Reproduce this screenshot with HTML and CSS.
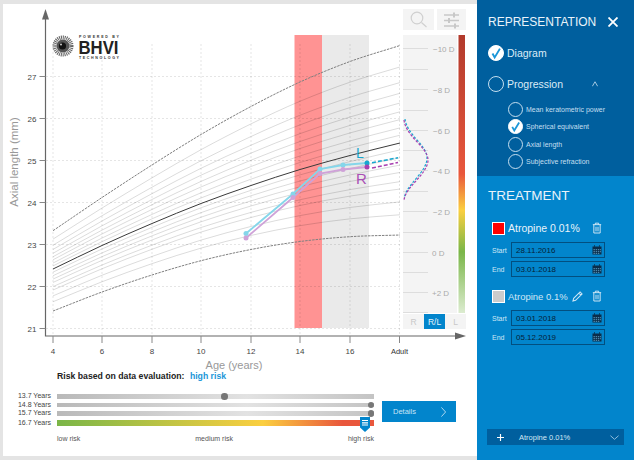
FILE: index.html
```html
<!DOCTYPE html>
<html lang="en">
<head>
    <meta charset="UTF-8">
    <meta name="viewport" content="width=device-width, initial-scale=1.0">
    <title>Myopia Progression</title>
    <link rel="stylesheet" href="styles.css">
</head>
<body>
    <svg class="icon-defs" width="0" height="0">
        <symbol id="i-check" viewBox="0 0 16 16">
            <path d="M4 8.5 L6.5 13 L12.5 3" fill="none" stroke="#1a96d8" stroke-width="2.2"/>
        </symbol>
        <symbol id="i-trash" viewBox="0 0 12 14">
            <path d="M1 3h10M4 3V1.2h4V3M2.2 3v10h7.6V3M4.8 5.5v5.5M7.2 5.5v5.5" fill="none" stroke="currentColor" stroke-width="1.1"/>
        </symbol>
        <symbol id="i-calendar" viewBox="0 0 10 10">
            <path d="M0.5 1.5h9v8h-9z" fill="#0b2d4a"/>
            <path d="M1.5 4h1.4v1.2H1.5zM3.7 4h1.4v1.2H3.7zM5.9 4h1.4v1.2H5.9zM8 4h.9v1.2H8zM1.5 6h1.4v1.2H1.5zM3.7 6h1.4v1.2H3.7zM5.9 6h1.4v1.2H5.9zM8 6h.9v1.2H8zM1.5 8h1.4v.9H1.5zM3.7 8h1.4v.9H3.7zM5.9 8h1.4v.9H5.9z" fill="#4d86a8"/>
            <path d="M2.5 0.3v1.4M7.5 0.3v1.4" stroke="#0b2d4a" stroke-width="1"/>
        </symbol>
    </svg>

    <div class="page">
        <div class="main">
            <div class="sheet">
                <svg class="chart" viewBox="3 4 474 366" width="474" height="366">
                    <!-- bands -->
                    <rect x="294.5" y="35" width="27.5" height="293" fill="#ff9393"/>
                    <rect x="322" y="35" width="47" height="293" fill="#eaeaea"/>

                    <!-- grid -->
                    <g class="grid">
                        <path d="M53 44V336M102 44V336M152 44V336M201 44V336M251 44V336M300 44V336M350 44V336M399.5 44V336"/>
                        <path d="M46 76.5H400M46 118.5H400M46 160.5H400M46 202.5H400M46 244.5H400M46 286.5H400M46 328.5H400"/>
                    </g>

                    <!-- percentile curves, filled in by chart.js -->
                    <g id="curves"></g>

                    <!-- axes -->
                    <g class="axis">
                        <path d="M45.5 16V336H458"/>
                    </g>
                    <g class="axis-ticks">
                        <path d="M39.500 76.5h6M39.500 118.5h6M39.500 160.5h6M39.500 202.5h6M39.500 244.5h6M39.500 286.5h6M39.500 328.5h6"/>
                        <path d="M53 336v7M102 336v7M152 336v7M201 336v7M251 336v7M300 336v7M350 336v7M399.5 336v7"/>
                    </g>
                    <path d="M45.5 9L49 19.5H42Z" fill="#666"/>
                    <path d="M466 336L455 332.5V339.5Z" fill="#666"/>

                    <g class="tick-label y-labels">
                        <text x="36.500" y="79.500">27</text>
                        <text x="36.500" y="121.500">26</text>
                        <text x="36.500" y="163.500">25</text>
                        <text x="36.500" y="205.500">24</text>
                        <text x="36.500" y="247.500">23</text>
                        <text x="36.500" y="289.500">22</text>
                        <text x="36.500" y="331.500">21</text>
                    </g>
                    <g class="tick-label x-labels">
                        <text x="53" y="353.500">4</text>
                        <text x="102" y="353.500">6</text>
                        <text x="152" y="353.500">8</text>
                        <text x="201" y="353.500">10</text>
                        <text x="251" y="353.500">12</text>
                        <text x="300" y="353.500">14</text>
                        <text x="350" y="353.500">16</text>
                        <text x="399.5" y="353.500" class="adult">Adult</text>
                    </g>
                    <text class="axis-title age-title" x="234" y="368.500" text-anchor="middle">Age (years)</text>
                    <text class="axis-title" transform="translate(18 162) rotate(-90)" text-anchor="middle">Axial length (mm)</text>

                    <!-- logo -->
                    <circle cx="63" cy="46" r="8.5" fill="none" stroke="#666" stroke-width="4" stroke-dasharray="1 .8"/>
                    <circle cx="63" cy="46" r="6.500" fill="#555"/>
                    <circle cx="62.5" cy="46" r="3.6" fill="#111"/>
                    <circle cx="61" cy="44.5" r="1" fill="#ccc"/>
                    <text class="logo-small" x="79" y="38" textLength="40">POWERED BY</text>
                    <text class="logo-big" x="78.5" y="53.5" textLength="40" lengthAdjust="spacingAndGlyphs">BHVI</text>
                    <text class="logo-small" x="79" y="59" textLength="40">TECHNOLOGY</text>

                    <!-- data -->
                    <polyline class="line-l" points="246,233.5 293,194 320,169 343,165 367,163"/>
                    <polyline class="line-r" points="246,238 293,197.5 320,173.5 343,169.5 367,167"/>
                    <g fill="#85d6ea">
                        <circle cx="246" cy="233.5" r="2.5"/><circle cx="293" cy="194" r="2.5"/><circle cx="320" cy="169" r="2.5"/><circle cx="343" cy="165" r="2.5"/>
                    </g>
                    <g fill="#cfa2d8">
                        <circle cx="246" cy="238" r="2.5"/><circle cx="293" cy="197.5" r="2.5"/><circle cx="320" cy="173.5" r="2.5"/><circle cx="343" cy="169.5" r="2.5"/>
                    </g>
                    <circle cx="367" cy="163" r="2.5" fill="#16a7cf"/>
                    <circle cx="367" cy="167" r="2.5" fill="#a83fb0"/>
                    <path class="dash-l" d="M372 162.7L398 157.7"/>
                    <path class="dash-r" d="M372 168L398 162.5"/>
                    <text class="mark-l" x="356" y="158">L</text>
                    <text class="mark-r" x="356" y="184">R</text>

                    <!-- refraction scale -->
                    <rect x="403" y="35" width="54" height="278" fill="#f4f4f4"/>
                    <defs>
                        <linearGradient id="scale" x1="0" y1="0" x2="0" y2="1">
                            <stop offset="0" stop-color="#b23a2c"/>
                            <stop offset="0.5" stop-color="#e9573c"/>
                            <stop offset="0.63" stop-color="#fbcf40"/>
                            <stop offset="0.78" stop-color="#7ab648"/>
                            <stop offset="1" stop-color="#dcecd0"/>
                        </linearGradient>
                    </defs>
                    <rect x="458.5" y="35" width="6.5" height="278" fill="url(#scale)"/>
                    <path class="scale-ticks" d="M403 48.500H428M403 69.500H428M403 89.500H428M403 110.500H428M403 130.500H428M403 150.500H428M403 170.500H428M403 191.500H428M403 211.500H428M403 232.500H428M403 252.500H428M403 272.500H428M403 292.500H428M403 312.500H428"/>
                    <g class="scale-label">
                        <text x="433" y="51.500">−10 D</text>
                        <text x="433" y="92.500">−8 D</text>
                        <text x="433" y="133.500">−6 D</text>
                        <text x="433" y="173.500">−4 D</text>
                        <text x="433" y="214.500">−2 D</text>
                        <text x="432" y="255.500">0 D</text>
                        <text x="432" y="295.500">+2 D</text>
                    </g>
                    <path class="dash-l thin" d="M405 119C407 135 427 145 427 158C427 172 407 184 404.500 197"/>
                    <path class="dash-r thin" d="M404 120C406 137 428 147 428 160C428 174 406 186 404 200"/>

                    <!-- R RL L switch -->
                    <rect x="403" y="314" width="21" height="15" fill="#f4f4f4"/>
                    <rect x="424" y="314" width="21" height="15" fill="#0285cc"/>
                    <rect x="445" y="314" width="21" height="15" fill="#f4f4f4"/>
                    <text class="eye off" x="413.500" y="324.500">R</text>
                    <text class="eye on" x="434.500" y="324.500">R/L</text>
                    <text class="eye off" x="455.500" y="324.500">L</text>

                    <!-- tool buttons -->
                    <rect x="403" y="9" width="31" height="21" fill="#f4f4f4"/>
                    <rect x="437" y="9" width="29" height="21" fill="#f4f4f4"/>
                    <circle cx="417" cy="18" r="5.800" fill="none" stroke="#d0d0d0" stroke-width="1.2"/>
                    <path d="M421.500 22.500L426.500 27" stroke="#d0d0d0" stroke-width="1.2"/>
                    <path d="M444 15H459M444 20.500H459M444 26H459" stroke="#c8c8c8" stroke-width="1.500"/>
                    <path d="M454 12.500v5M449 18v5M455 23.500v5" stroke="#c8c8c8" stroke-width="2"/>
                </svg>

                <div class="risk-title">Risk based on data evaluation: <span class="risk-value">high risk</span></div>

                <div class="risk-body">
                    <div class="risk-sliders">
                        <div class="risk-row">
                            <span class="risk-age">13.7 Years</span>
                            <div class="track"><span class="knob knob-mid"></span></div>
                        </div>
                        <div class="risk-row">
                            <span class="risk-age">14.8 Years</span>
                            <div class="track"><span class="knob knob-end"></span></div>
                        </div>
                        <div class="risk-row">
                            <span class="risk-age">15.7 Years</span>
                            <div class="track"><span class="knob knob-end"></span></div>
                        </div>
                        <div class="risk-row risk-row-last">
                            <span class="risk-age">16.7 Years</span>
                            <div class="track-color">
                                <svg class="pin" viewBox="0 0 10 15" width="10" height="15">
                                    <path d="M0 0H10V10.500L5 15L0 10.500Z" fill="#0285cc"/>
                                    <path d="M2 3.500H8M2 5.800H8M2 8H8" stroke="#fff" stroke-width="1.200"/>
                                </svg>
                            </div>
                        </div>
                        <div class="risk-scale">
                            <span>low risk</span>
                            <span>medium risk</span>
                            <span>high risk</span>
                        </div>
                    </div>
                    <div class="details">
                        <span>Details</span>
                        <svg viewBox="0 0 6 12" width="5" height="10"><path d="M0.500 0.500L5.500 6L0.500 11.500" fill="none" stroke="#cfe7f6" stroke-width="1"/></svg>
                    </div>
                </div>
            </div>
        </div>

        <div class="side">
            <div class="representation">
                <div class="side-head">
                    <h2>REPRESENTATION</h2>
                    <svg class="close" viewBox="0 0 10 10" width="10" height="10"><path d="M0.500 0.500L9.500 9.500M9.500 0.500L0.500 9.500" stroke="#fff" stroke-width="1.800"/></svg>
                </div>
                <div class="option option-diagram">
                    <span class="radio checked"><svg><use href="#i-check"/></svg></span>
                    <span>Diagram</span>
                </div>
                <div class="option option-progression">
                    <span class="radio"></span>
                    <span>Progression</span>
                    <svg class="caret" viewBox="0 0 8 7" width="6" height="6"><path d="M0.500 6.500L4 0.500L7.500 6.500" fill="none" stroke="#d5e8f5" stroke-width="1"/></svg>
                </div>
                <ul class="sub-options">
                    <li><span class="radio small"></span>Mean keratometric power</li>
                    <li><span class="radio small checked"><svg><use href="#i-check"/></svg></span>Spherical equivalent</li>
                    <li><span class="radio small"></span>Axial length</li>
                    <li><span class="radio small"></span>Subjective refraction</li>
                </ul>
            </div>

            <div class="treatment">
                <h2>TREATMENT</h2>

                <div class="drug">
                    <div class="drug-head">
                        <span class="swatch swatch-red"></span>
                        <span class="drug-name">Atropine 0.01%</span>
                        <svg class="trash"><use href="#i-trash"/></svg>
                    </div>
                    <div class="date-row"><label>Start</label><div class="date-input">28.11.2016<svg><use href="#i-calendar"/></svg></div></div>
                    <div class="date-row"><label>End</label><div class="date-input">03.01.2018<svg><use href="#i-calendar"/></svg></div></div>
                </div>

                <div class="drug">
                    <div class="drug-head">
                        <span class="swatch swatch-gray"></span>
                        <span class="drug-name dim">Atropine 0.1%</span>
                        <svg class="pencil" viewBox="0 0 12 12" width="11" height="11"><path d="M1 11L1.800 8L8.800 1L11 3.200L4 10.200Z M7.500 2.300L9.700 4.500" fill="none" stroke="#cfe7f6" stroke-width="1.100"/></svg>
                        <svg class="trash"><use href="#i-trash"/></svg>
                    </div>
                    <div class="date-row"><label>Start</label><div class="date-input">03.01.2018<svg><use href="#i-calendar"/></svg></div></div>
                    <div class="date-row"><label>End</label><div class="date-input">05.12.2019<svg><use href="#i-calendar"/></svg></div></div>
                </div>

                <div class="add-bar">
                    <svg viewBox="0 0 8 8" width="7" height="7"><path d="M4 0V8M0 4H8" stroke="#fff" stroke-width="1.300"/></svg>
                    <span class="add-name">Atropine 0.01%</span>
                    <svg class="add-caret" viewBox="0 0 10 5" width="9" height="5"><path d="M0.500 0.500L5 4.500L9.500 0.500" fill="none" stroke="#9cc6e2" stroke-width="1"/></svg>
                </div>
            </div>
        </div>
    </div>

    <script src="chart.js"></script>
</body>
</html>
```

FILE: styles.css
```css
* {
    box-sizing: border-box;
}

body {
    font-family: "Liberation Sans", Arial, sans-serif;
    margin: 0;
    padding: 0;
    background-color: #e4e4e4;
}

.icon-defs {
    position: absolute;
}

.page {
    display: flex;
    width: 634px;
    height: 460px;
    overflow: hidden;
}

.main {
    width: 477px;
    padding: 4px 0 4px 3px;
}

.sheet {
    width: 474px;
    height: 452px;
    background: #ffffff;
}

.chart {
    display: block;
    overflow: visible;
}

.grid path {
    fill: none;
    stroke: rgba(0, 0, 0, 0.1);
    stroke-width: 1;
    stroke-dasharray: 2 2;
}

.axis path {
    fill: none;
    stroke: #666666;
    stroke-width: 1.2;
}

.axis-ticks path {
    fill: none;
    stroke: #888888;
    stroke-width: 1;
}

.tick-label text {
    font-size: 8px;
    fill: #444444;
}

.y-labels text {
    text-anchor: end;
}

.x-labels text {
    text-anchor: middle;
}

.x-labels .adult {
    font-size: 7.5px;
    fill: #333333;
}

.axis-title {
    font-size: 11.5px;
    fill: #999999;
}

.age-title {
    font-size: 11px;
}

.logo-small {
    font-size: 3.6px;
    font-weight: bold;
    fill: #333333;
}

.logo-big {
    font-size: 18px;
    font-weight: bold;
    fill: #222222;
}

.line-l,
.line-r {
    fill: none;
    stroke-width: 1.8;
}

.line-l {
    stroke: #85d6ea;
}

.line-r {
    stroke: #cfa2d8;
}

.dash-l,
.dash-r {
    fill: none;
    stroke-width: 1.6;
    stroke-dasharray: 4 2;
}

.dash-l {
    stroke: #16a7cf;
}

.dash-r {
    stroke: #a83fb0;
}

.thin {
    stroke-width: 1.2;
    stroke-dasharray: 2.5 1.5;
}

.mark-l {
    font-size: 14px;
    fill: #16a7cf;
}

.mark-r {
    font-size: 15px;
    fill: #a94fb5;
}

.scale-ticks {
    fill: none;
    stroke: #dddddd;
    stroke-width: 1;
}

.scale-label text {
    font-size: 8px;
    fill: #aaaaaa;
}

.eye {
    font-size: 8.5px;
    text-anchor: middle;
}

.eye.off {
    fill: #c8c8c8;
}

.eye.on {
    fill: #e5f3fb;
}

/* risk section */
.risk-title {
    height: 13px;
    padding-left: 54px;
    font-size: 8.7px;
    font-weight: bold;
    line-height: 13px;
    color: #222222;
}

.risk-value {
    margin-left: 3px;
    color: #1a96d8;
}

.risk-body {
    display: flex;
    padding-top: 9px;
}

.risk-sliders {
    width: 371px;
}

.risk-row {
    display: grid;
    grid-template-columns: 48px 317px;
    column-gap: 6px;
    align-items: center;
    height: 8.5px;
}

.risk-row-last {
    height: 10px;
}

.risk-age {
    font-size: 7px;
    line-height: 8px;
    text-align: right;
    color: #444444;
}

.track {
    position: relative;
    height: 4.5px;
    background: linear-gradient(to right, #b9b9b9, #e2e2e2 60%, #c4c4c4);
}

.knob {
    position: absolute;
    top: -1px;
    width: 6.5px;
    height: 6.5px;
    border-radius: 50%;
    background: #777777;
}

.knob-mid {
    left: 164px;
}

.knob-end {
    right: 0;
}

.track-color {
    position: relative;
    height: 6px;
    background: linear-gradient(to right, #7ab648, #fbcf40 65%, #e9573c 90%, #e9573c);
}

.pin {
    position: absolute;
    top: -3px;
    right: 4px;
    display: block;
}

.risk-scale {
    display: flex;
    justify-content: space-between;
    margin: 7px 0 0 54px;
    width: 317px;
    font-size: 7px;
    line-height: 8px;
    color: #555555;
}

.details {
    display: flex;
    align-items: center;
    justify-content: space-between;
    width: 74px;
    height: 21px;
    margin: 9px 0 0 8px;
    padding: 0 10px 0 11px;
    background: #0285cc;
    font-size: 7.5px;
    color: #c9e4f5;
}

/* side panel */
.side {
    display: flex;
    flex-direction: column;
    width: 157px;
    color: #ffffff;
}

.representation {
    height: 176px;
    padding: 14px 0 0 11px;
    background: #005f9e;
}

.side-head {
    display: flex;
    align-items: center;
    justify-content: space-between;
    padding-right: 16px;
    height: 15px;
}

h2 {
    margin: 0;
    font-weight: normal;
    font-size: 12px;
    color: #e9f3fa;
}

.radio {
    display: block;
    flex: none;
    width: 16px;
    height: 16px;
    border: 1px solid #c5deef;
    border-radius: 50%;
}

.radio.checked {
    background: #ffffff;
    border-color: #ffffff;
}

.radio svg {
    display: block;
    width: 100%;
    height: 100%;
}

.radio.small {
    width: 15px;
    height: 15px;
    margin-right: 3px;
}

.option {
    display: flex;
    align-items: center;
    gap: 3px;
    font-size: 10.5px;
    color: #dcecf7;
    height: 16px;
}

.option-diagram {
    margin-top: 16px;
}

.option-progression {
    margin-top: 15px;
}

.caret {
    margin-left: 26px;
}

.sub-options {
    list-style: none;
    margin: 9px 0 0 20px;
    padding: 0;
    font-size: 7px;
    color: #c4dff0;
}

.sub-options li {
    display: flex;
    align-items: center;
    height: 17.300px;
}

.treatment {
    flex: 1;
    position: relative;
    padding: 12px 0 0 11px;
    background: #0285cc;
}

.treatment h2 {
    font-size: 13.5px;
    line-height: 15px;
}

.drug {
    padding-left: 4px;
}

.drug-head {
    display: flex;
    align-items: center;
    height: 14px;
    margin-top: 18px;
}

.drug + .drug .drug-head {
    margin-top: 12px;
}

.swatch {
    width: 13px;
    height: 13px;
    margin-right: 3px;
    border: 1px solid #ffffff;
}

.swatch-red {
    background: #ff0000;
}

.swatch-gray {
    background: #cccccc;
}

.drug-name {
    width: 84px;
    font-size: 10.5px;
    color: #e9f3fa;
}

.drug-name.dim {
    width: 64px;
    font-size: 9.5px;
    color: #cfe7f6;
}

.pencil {
    margin-right: 9px;
}

.trash {
    width: 10px;
    height: 12px;
    color: #dcecf7;
}

.date-row {
    display: flex;
    align-items: center;
    height: 16px;
    margin-top: 3px;
}

.drug-head + .date-row {
    margin-top: 7px;
}

.date-row label {
    width: 19px;
    font-size: 7px;
    color: #cfe7f6;
}

.date-input {
    display: flex;
    align-items: center;
    justify-content: space-between;
    width: 94px;
    height: 16px;
    padding: 0 2px 0 4px;
    border: 1px solid #024f80;
    font-size: 8px;
    color: #062338;
}

.date-input svg {
    width: 10px;
    height: 10px;
}

.add-bar {
    position: absolute;
    left: 10px;
    right: 10px;
    top: 253px;
    display: flex;
    align-items: center;
    height: 16px;
    padding-left: 10px;
    background: #005f9e;
    font-size: 7.5px;
    color: #d5e8f5;
}

.add-name {
    margin-left: 15px;
}

.add-caret {
    margin-left: auto;
    margin-right: 5px;
}
```

FILE: chart.js
```js
// Percentile curves of axial length, sampled at ages 4..16 and adult
const ages = [53, 102, 152, 201, 251, 300, 350, 400];
const upper = [230.7, 197.5, 165, 134.5, 106.5, 82, 61.5, 45.5];
const middle = [269, 245.5, 223.5, 203.5, 185.5, 169.5, 155.5, 143];
const lower = [311, 292, 275, 260.7, 249.5, 241.5, 236.7, 235];

// how far each gray curve sits between the two outer ones
const above = [0.78, 0.62, 0.51, 0.41, 0.32, 0.24, 0.155, 0.08];
const below = [0.075, 0.16, 0.24, 0.32, 0.42, 0.5, 0.64, 0.78];

const curves = document.getElementById('curves');

function drawCurve(ys, color, dash) {
    let d = `M${ages[0]} ${ys[0]}`;
    for (let i = 0; i < ages.length - 1; i++) {
        const prev = i === 0 ? 2 * ys[0] - ys[1] : ys[i - 1];
        const next = i === ys.length - 2 ? 2 * ys[i + 1] - ys[i] : ys[i + 2];
        const step = ages[i + 1] - ages[i];
        const c1 = ys[i] + (ys[i + 1] - prev) / 6;
        const c2 = ys[i + 1] - (next - ys[i]) / 6;
        d += `C${ages[i] + step / 3} ${c1} ${ages[i + 1] - step / 3} ${c2} ${ages[i + 1]} ${ys[i + 1]}`;
    }
    const path = document.createElementNS('http://www.w3.org/2000/svg', 'path');
    path.setAttribute('d', d);
    path.setAttribute('fill', 'none');
    path.setAttribute('stroke', color);
    if (dash) path.setAttribute('stroke-dasharray', dash);
    curves.appendChild(path);
}

above.forEach(f => drawCurve(middle.map((y, i) => y + (upper[i] - y) * f), 'rgba(0, 0, 0, 0.14)'));
below.forEach(f => drawCurve(middle.map((y, i) => y + (lower[i] - y) * f), 'rgba(0, 0, 0, 0.14)'));
drawCurve(upper, '#808080', '2.5 1');
drawCurve(lower, '#808080', '2.5 1');
drawCurve(middle, '#3a3a3a');
```
